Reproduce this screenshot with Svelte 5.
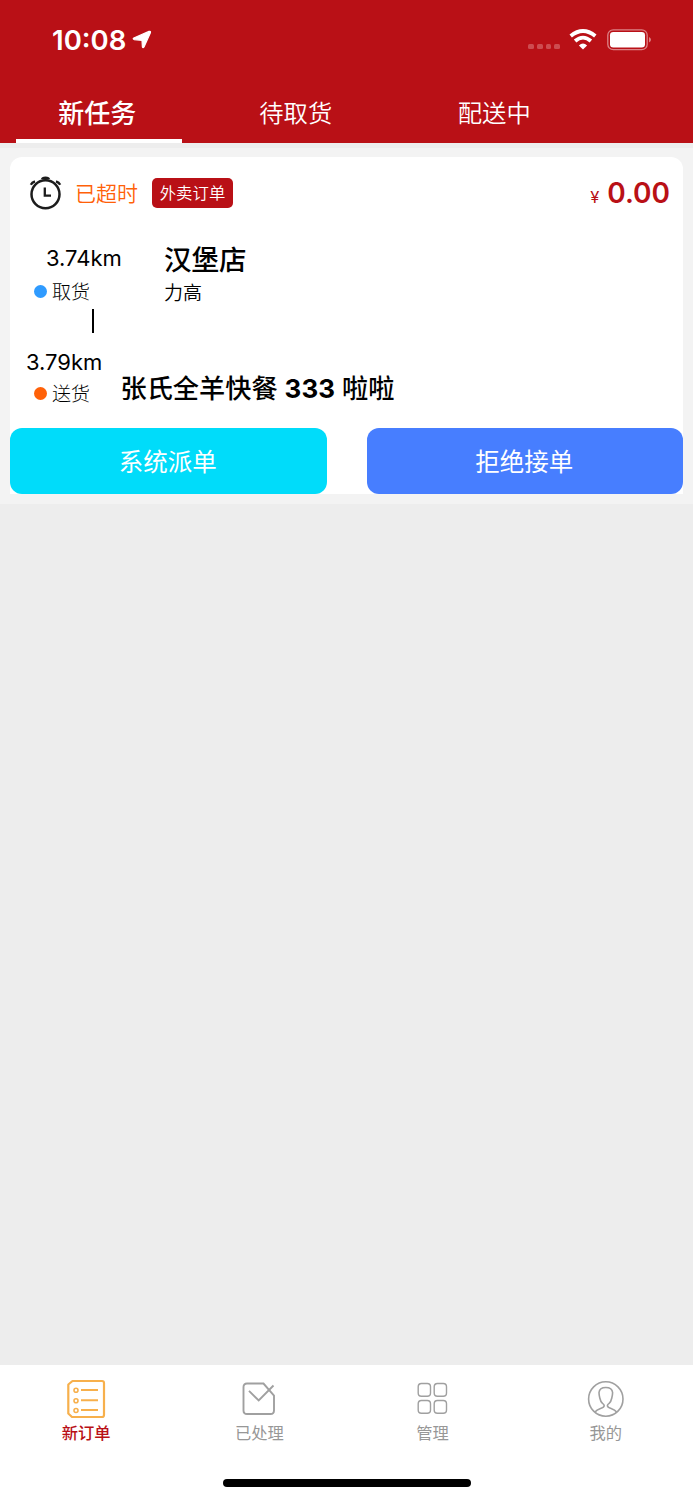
<script>
  let activeTab = 0;
  let activeNav = 'orders';

  const tabs = ['新任务', '待取货', '配送中'];
  const navItems = [
    { id: 'orders', label: '新订单' },
    { id: 'done', label: '已处理' },
    { id: 'manage', label: '管理' },
    { id: 'mine', label: '我的' }
  ];

  const order = {
    state: '已超时',
    type: '外卖订单',
    price: '0.00',
    pickup: { distance: '3.74km', label: '取货', name: '汉堡店', address: '力高' },
    dropoff: { distance: '3.79km', label: '送货', name: '张氏全羊快餐', number: '333', suffix: '啦啦' }
  };
</script>

<div class="screen">
  <header>
    <div class="status-bar">
      <span class="time">10:08</span>
      <svg class="location" width="20" height="20" viewBox="0 0 20 20">
        <path d="M1.800 8 17 1.400 Q18.900 .9 18.400 2.800 L12 17 Q11 18.400 10.400 17 L10 10.300 L2.300 9.600 Q.4 9 1.800 8Z" fill="#fff" stroke="#fff" stroke-width="1.200" stroke-linejoin="round" />
      </svg>
      <div class="signal"><i></i><i></i><i></i><i></i></div>
      <svg class="wifi" width="28" height="21" viewBox="0 0 28 21">
        <g fill="none" stroke="#fff" stroke-width="3.800">
          <path d="M1.700 7 Q14 -3 26.300 7" />
          <path d="M6.100 12 Q14 5.200 21.900 12" />
        </g>
        <path d="M9.900 16.500 Q14 12.600 18.100 16.500 L14 20.500Z" fill="#fff" />
      </svg>
      <svg class="battery" width="45" height="22" viewBox="0 0 45 22">
        <rect x=".8" y=".8" width="39.400" height="19.900" rx="5.500" fill="none" stroke="#dc8286" stroke-width="1.300" />
        <rect x="3" y="3" width="35" height="15.500" rx="3.300" fill="#fff" />
        <path d="M42 8 Q44 9 44 10.800 Q44 12.600 42 13.600Z" fill="#dc8286" />
      </svg>
    </div>
    <nav class="tabs">
      {#each tabs as tab, index}
        <button class="tab {activeTab === index ? 'selected' : ''}" on:click={() => (activeTab = index)}>
          <span>{tab}</span>
        </button>
      {/each}
    </nav>
  </header>

  <main>
    <section class="list">
      <article class="card">
        <div class="card-head">
          <svg width="33" height="34" viewBox="0 0 33 34">
            <g fill="none" stroke="#1c1c1c">
              <circle cx="16.500" cy="18.300" r="14" stroke-width="2.500" />
              <path d="M15.800 11.500 V19.700 H22" stroke-width="2.300" />
              <path d="M1.800 8.800 Q3 6.500 6 5.400 M31.200 8.800 Q30 6.500 27 5.400" stroke-width="2.300" />
            </g>
            <path d="M12 3 Q12.300 .5 16.500 .5 Q20.700 .5 21 3 Q16.500 4.500 12 3Z" fill="#1c1c1c" />
          </svg>
          <span class="state">{order.state}</span>
          <span class="tag">{order.type}</span>
          <span class="price"><small>¥</small>{order.price}</span>
        </div>

        <div class="stop pickup">
          <div class="leg">
            <div class="distance">{order.pickup.distance}</div>
            <div class="kind"><i class="dot"></i><span>{order.pickup.label}</span></div>
          </div>
          <div class="place">
            <h2>{order.pickup.name}</h2>
            <p>{order.pickup.address}</p>
          </div>
        </div>

        <div class="connector"></div>

        <div class="stop dropoff">
          <div class="leg">
            <div class="distance">{order.dropoff.distance}</div>
            <div class="kind"><i class="dot"></i><span>{order.dropoff.label}</span></div>
          </div>
          <h2>{order.dropoff.name} <b>{order.dropoff.number}</b> {order.dropoff.suffix}</h2>
        </div>

        <div class="actions">
          <button class="assign">系统派单</button>
          <button class="refuse">拒绝接单</button>
        </div>
      </article>
    </section>
  </main>

  <footer>
    <nav class="bottom-nav">
      {#each navItems as item}
        <button class="nav-item {activeNav === item.id ? 'selected' : ''}" on:click={() => (activeNav = item.id)}>
          <svg width="40" height="40" viewBox="0 0 40 40" fill="none" stroke="#a0a0a0" stroke-width="1.600">
            {#if item.id === 'orders'}
              <g stroke="#f7b04c">
                <path d="M6.500 2 H36 Q38 2 38 4 V36 Q38 38 36 38 H6 L2.300 34.500 V5.500Z" stroke-width="2.200" stroke-linejoin="round" />
                <path d="M15 11 H32 M15 21.300 H32 M15 31 H32" stroke-width="2" />
                <circle cx="10" cy="11.300" r="2" />
                <circle cx="10" cy="21.700" r="2" />
                <circle cx="10" cy="31.500" r="2" />
              </g>
            {:else if item.id === 'done'}
              <path d="M24.500 4.500 H8 Q4.500 4.500 4.500 8 V31.500 Q4.500 35 8 35 H31.500 Q35 35 35 31.500 V16.500 L24.500 4.500Z" stroke-width="1.900" />
              <path d="M10 11.800 19.700 21.500 34.500 6.500" stroke-width="1.900" />
            {:else if item.id === 'manage'}
              <rect x="5.200" y="4.500" width="12.300" height="12.800" rx="3.200" stroke-width="1.400" />
              <rect x="21.200" y="4.500" width="12.300" height="12.800" rx="3.200" stroke-width="1.400" />
              <rect x="5.200" y="21.500" width="12.300" height="12.800" rx="3.200" stroke-width="1.400" />
              <rect x="21.200" y="21.500" width="12.300" height="12.800" rx="3.200" stroke-width="1.400" />
            {:else}
              <circle cx="19.800" cy="20" r="17.200" stroke-width="1.600" />
              <path d="M9 33 Q10.500 31 14.500 29.500 Q18.200 28.500 18.200 26.500 Q18.200 25.500 16.500 24.300 Q14.500 22.500 13.800 19 Q13 16 13 13.500 Q13.500 8.500 19.800 8.500 Q26.100 8.500 26.600 13.500 Q26.600 16 25.800 19 Q25.100 22.500 23.100 24.300 Q21.400 25.500 21.400 26.500 Q21.400 28.500 25.100 29.500 Q29.100 31 30.600 33" />
            {/if}
          </svg>
          <span>{item.label}</span>
        </button>
      {/each}
    </nav>
    <div class="home-indicator"></div>
  </footer>
</div>

<style>
  :global(body) {
    margin: 0;
  }

  .screen {
    display: flex;
    flex-direction: column;
    width: 693px;
    height: 1500px;
    background: #ededed;
    color: #000;
    font-family: Inter, "Noto Sans CJK SC", sans-serif;
  }

  button {
    padding: 0;
    border: none;
    background: none;
    font-family: inherit;
    cursor: pointer;
  }

  header {
    height: 143px;
    background: #b91016;
    color: white;
  }

  .status-bar {
    display: flex;
    align-items: center;
    box-sizing: border-box;
    height: 80px;
    padding: 0 41px 0 52px;
  }

  .time {
    width: 74px;
    font-size: 27.5px;
    font-weight: 600;
    line-height: 32px;
    white-space: nowrap;
  }

  .location {
    margin: 0 0 1px 6px;
  }

  .signal {
    display: flex;
    gap: 3px;
    margin: 13px 9px 0 auto;
  }

  .signal i {
    width: 5.7px;
    height: 5.7px;
    border-radius: 1.5px;
    background: #cd4c50;
  }

  .wifi {
    margin: 0 10px 2px 0;
  }

  .battery {
    margin-bottom: 1px;
  }

  .tabs {
    display: flex;
    height: 63px;
  }

  .tab {
    display: flex;
    justify-content: center;
    box-sizing: border-box;
    width: 198.5px;
    padding: 15px 4px 0 0;
    color: white;
    font-size: 24.3px;
    font-weight: 350;
    line-height: 36px;
    position: relative;
  }

  .tab.selected {
    padding-top: 16px;
    font-size: 26px;
    font-weight: 500;
  }

  .tab.selected::after {
    content: '';
    position: absolute;
    left: 16px;
    bottom: 0;
    width: 166px;
    height: 4px;
    background: white;
  }

  main {
    flex: 1;
    padding-top: 5px;
  }

  .list {
    padding: 9px 10px 10px;
    background: #f3f3f3;
  }

  .card {
    height: 337px;
    border-radius: 12px 12px 0 0;
    background: white;
    display: flex;
    flex-direction: column;
  }

  .card-head {
    display: flex;
    align-items: center;
    height: 72px;
    padding: 0 13px 0 19px;
  }

  .state {
    margin: 1px 0 0 13px;
    color: #ff6108;
    font-size: 21px;
    font-weight: 350;
    line-height: 30px;
  }

  .tag {
    width: 81px;
    margin-left: 14px;
    border-radius: 5px;
    background: #b91016;
    color: white;
    font-size: 16.4px;
    font-weight: 350;
    line-height: 30px;
    text-align: center;
  }

  .price {
    margin: 3px 0 0 auto;
    color: #b91016;
    font-size: 28px;
    font-weight: 600;
    line-height: 36px;
  }

  .price small {
    margin-right: 8px;
    font-size: 16.5px;
    font-weight: 400;
  }

  .stop {
    display: flex;
  }

  .distance {
    font-size: 22px;
    line-height: 30px;
  }

  .kind {
    display: flex;
    align-items: center;
    font-size: 19px;
    font-weight: 300;
    line-height: 28px;
  }

  .kind span {
    padding-top: 3px;
  }

  .dot {
    width: 13px;
    height: 13px;
    margin-right: 5px;
    border-radius: 50%;
    background: #2f9bff;
  }

  h2 {
    margin: 0;
    font-weight: 500;
  }

  p {
    margin: 2px 0 0;
    font-size: 19px;
    font-weight: 350;
    line-height: 28px;
  }

  .pickup {
    padding: 14px 0 0 24px;
  }

  .pickup .leg {
    width: 130px;
  }

  .pickup .distance {
    margin: 0 0 3px 12px;
  }

  .pickup h2 {
    font-size: 27.5px;
    line-height: 35px;
  }

  .connector {
    width: 2px;
    height: 24px;
    margin: 1px 0 0 82px;
    background: black;
  }

  .dropoff {
    padding: 14px 0 0 16px;
  }

  .dropoff .leg {
    width: 94.5px;
  }

  .dropoff .kind {
    margin: 1px 0 0 8px;
  }

  .dropoff .dot {
    background: #ff6108;
  }

  .dropoff h2 {
    padding-top: 24px;
    font-size: 26.2px;
    line-height: 36px;
    white-space: nowrap;
  }

  .dropoff b {
    font-size: 26px;
    font-weight: 650;
  }

  .actions {
    display: flex;
    gap: 40px;
    margin-top: auto;
  }

  .actions button {
    flex: 1;
    height: 66px;
    padding: 2px 1px 0 0;
    border-radius: 12px;
    color: white;
    font-size: 24.5px;
    font-weight: 400;
    line-height: 64px;
  }

  .actions .assign {
    background: #00dcfa;
  }

  .actions .refuse {
    background: #477eff;
  }

  footer {
    height: 135px;
    background: white;
  }

  .bottom-nav {
    display: flex;
    height: 114px;
  }

  .nav-item {
    flex: 1;
    display: flex;
    flex-direction: column;
    align-items: center;
    padding: 14px 1px 0 0;
    color: #979797;
    font-size: 16.3px;
    line-height: 24px;
  }

  .nav-item span {
    margin-top: 2px;
  }

  .nav-item.selected {
    color: #b91016;
    font-weight: 500;
  }

  .home-indicator {
    width: 248px;
    height: 8px;
    margin: 0 auto;
    border-radius: 4px;
    background: black;
  }
</style>
